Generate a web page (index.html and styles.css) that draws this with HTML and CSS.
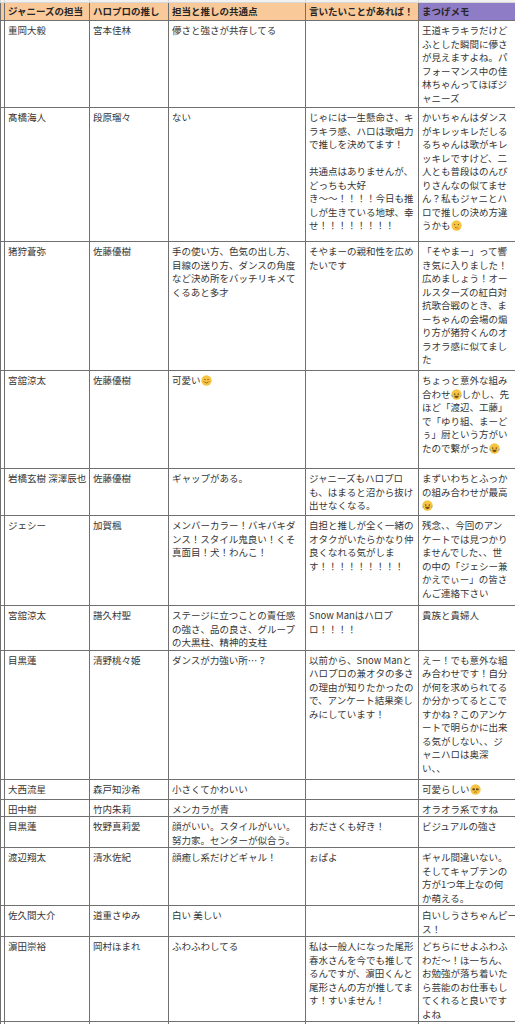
FILE: index.html
```html
<!DOCTYPE html>
<html lang="ja">
<head>
<meta charset="utf-8">
<title>ジャニハロ アンケート</title>
<link rel="stylesheet" href="styles.css">
</head>
<body>
<svg width="0" height="0" class="defs">
  <defs>
    <symbol id="e-smile" viewBox="0 0 12 12">
      <circle cx="6" cy="6" r="5.6" fill="#f5c542"/>
      <path d="M3.4 5.2 q0.9-1 1.8 0 M6.8 5.2 q0.9-1 1.8 0" stroke="#7a4a12" stroke-width="0.8" fill="none"/>
      <ellipse cx="3" cy="7.2" rx="1.1" ry="0.7" fill="#f08a6a"/>
      <ellipse cx="9" cy="7.2" rx="1.1" ry="0.7" fill="#f08a6a"/>
      <path d="M4 7.8 q2 1.8 4 0" stroke="#7a4a12" stroke-width="0.8" fill="none"/>
    </symbol>
    <symbol id="e-laugh" viewBox="0 0 12 12">
      <circle cx="6" cy="6" r="5.6" fill="#f5c542"/>
      <path d="M3.2 4.8 l1.6 0.8 l-1.6 0.8 M8.8 4.8 l-1.6 0.8 l1.6 0.8" stroke="#7a4a12" stroke-width="0.8" fill="none"/>
      <path d="M3.4 7.4 h5.2 q-0.6 2.6 -2.6 2.6 q-2 0 -2.6 -2.6z" fill="#7a4a12"/>
      <path d="M1.2 6.4 q-0.6 1.4 0.4 2" stroke="#5aa8e6" stroke-width="1" fill="none"/>
      <path d="M10.8 6.4 q0.6 1.4 -0.4 2" stroke="#5aa8e6" stroke-width="1" fill="none"/>
    </symbol>
    <symbol id="e-hush" viewBox="0 0 12 12">
      <circle cx="6" cy="6" r="5.6" fill="#f5c542"/>
      <circle cx="4" cy="5" r="0.7" fill="#7a4a12"/>
      <circle cx="8" cy="5" r="0.7" fill="#7a4a12"/>
      <path d="M4.4 8 q1.6 0.8 3.2 0" stroke="#7a4a12" stroke-width="0.8" fill="none"/>
      <ellipse cx="7.6" cy="9.4" rx="2" ry="1.4" fill="#f0b030"/>
    </symbol>
    <symbol id="e-plead" viewBox="0 0 12 12">
      <circle cx="6" cy="6" r="5.6" fill="#f5c542"/>
      <circle cx="4" cy="5.6" r="1.3" fill="#5a3510"/>
      <circle cx="8" cy="5.6" r="1.3" fill="#5a3510"/>
      <circle cx="4.3" cy="5.2" r="0.45" fill="#fff"/>
      <circle cx="8.3" cy="5.2" r="0.45" fill="#fff"/>
      <path d="M4.6 9 q1.4 -0.9 2.8 0" stroke="#7a4a12" stroke-width="0.8" fill="none"/>
    </symbol>
  </defs>
</svg>
<table class="sheet">
  <colgroup>
    <col class="c0"><col class="c1"><col class="c2"><col class="c3"><col class="c4"><col class="c5">
  </colgroup>
  <thead>
    <tr class="strip"><td></td><td></td><td></td><td></td><td></td><td></td></tr>
    <tr class="head">
      <th class="orange"></th>
      <th class="orange">ジャニーズの担当</th>
      <th class="orange">ハロプロの推し</th>
      <th class="orange">担当と推しの共通点</th>
      <th class="orange">言いたいことがあれば！</th>
      <th class="purple">まつげメモ</th>
    </tr>
  </thead>
  <tbody>
    <tr class="r1"><td></td><td>重岡大毅</td><td>宮本佳林</td><td>儚さと強さが共存してる</td><td></td><td>王道キラキラだけど<br>ふとした瞬間に儚さ<br>が見えますよね。パ<br>フォーマンス中の佳<br>林ちゃんってほぼジ<br>ャニーズ</td></tr>
    <tr class="r2"><td></td><td>髙橋海人</td><td>段原瑠々</td><td>ない</td><td>じゃには一生懸命さ、キ<br>ラキラ感、ハロは歌唱力<br>で推しを決めてます！<br><br>共通点はありませんが、<br>どっちも大好<br>き〜〜！！！！今日も推<br>しが生きている地球、幸<br>せ！！！！！！！！</td><td>かいちゃんはダンス<br>がキレッキレだしる<br>るちゃんは歌がキレ<br>ッキレですけど、二<br>人とも普段はのんび<br>りさんなの似てませ<br>ん？私もジャニとハ<br>ロで推しの決め方違<br>うかも<svg class="emo"><use href="#e-hush"/></svg></td></tr>
    <tr class="r3"><td></td><td>猪狩蒼弥</td><td>佐藤優樹</td><td>手の使い方、色気の出し方、<br>目線の送り方、ダンスの角度<br>など決め所をバッチリキメて<br>くるあと多才</td><td>そやまーの親和性を広め<br>たいです</td><td>「そやまー」って響<br>き気に入りました！<br>広めましょう！オー<br>ルスターズの紅白対<br>抗歌合戦のとき、ま<br>ーちゃんの会場の煽<br>り方が猪狩くんのオ<br>ラオラ感に似てまし<br>た</td></tr>
    <tr class="r4"><td></td><td>宮舘涼太</td><td>佐藤優樹</td><td>可愛い<svg class="emo"><use href="#e-smile"/></svg></td><td></td><td class="emo-lines">ちょっと意外な組み<br>合わせ<svg class="emo"><use href="#e-laugh"/></svg>しかし、先<br>ほど「渡辺、工藤」<br>で「ゆり組、まーど<br>ぅ」厨という方がい<br>たので繋がった<svg class="emo"><use href="#e-laugh"/></svg></td></tr>
    <tr class="r5"><td></td><td>岩橋玄樹 深澤辰也</td><td>佐藤優樹</td><td>ギャップがある。</td><td>ジャニーズもハロプロ<br>も、はまると沼から抜け<br>出せなくなる。</td><td>まずいわちとふっか<br>の組み合わせが最高<br><svg class="emo"><use href="#e-laugh"/></svg></td></tr>
    <tr class="r6"><td></td><td>ジェシー</td><td>加賀楓</td><td>メンバーカラー！バキバキダ<br>ンス！スタイル鬼良い！くそ<br>真面目！犬！わんこ！</td><td>自担と推しが全く一緒の<br>オタクがいたらかなり仲<br>良くなれる気がしま<br>す！！！！！！！！！</td><td>残念、、今回のアン<br>ケートでは見つかり<br>ませんでした、、世<br>の中の「ジェシー兼<br>かえでぃー」の皆さ<br>んご連絡下さい</td></tr>
    <tr class="r7"><td></td><td>宮舘涼太</td><td>譜久村聖</td><td>ステージに立つことの責任感<br>の強さ、品の良さ、グループ<br>の大黒柱、精神的支柱</td><td>Snow Manはハロプ<br>ロ！！！！</td><td>貴族と貴婦人</td></tr>
    <tr class="r8"><td></td><td>目黒蓮</td><td>清野桃々姫</td><td>ダンスが力強い所…？</td><td>以前から、Snow Manと<br>ハロプロの兼オタの多さ<br>の理由が知りたかったの<br>で、アンケート結果楽し<br>みにしています！</td><td>えー！でも意外な組<br>み合わせです！自分<br>が何を求められてる<br>か分かってるとこで<br>すかね？このアンケ<br>ートで明らかに出来<br>る気がしない、、ジ<br>ャニハロは奥深<br>い、、</td></tr>
    <tr class="r9"><td></td><td>大西流星</td><td>森戸知沙希</td><td>小さくてかわいい</td><td></td><td>可愛らしい<svg class="emo"><use href="#e-plead"/></svg></td></tr>
    <tr class="r10"><td></td><td>田中樹</td><td>竹内朱莉</td><td>メンカラが青</td><td></td><td>オラオラ系ですね</td></tr>
    <tr class="r11"><td></td><td>目黒蓮</td><td>牧野真莉愛</td><td>顔がいい。スタイルがいい。<br>努力家。センターが似合う。</td><td>おださくも好き！</td><td>ビジュアルの強さ</td></tr>
    <tr class="r12"><td></td><td>渡辺翔太</td><td>清水佐紀</td><td>顔癒し系だけどギャル！</td><td>ぉぱよ</td><td>ギャル間違いない。<br>そしてキャプテンの<br>方が1つ年上なの何<br>か萌える。</td></tr>
    <tr class="r13"><td></td><td>佐久間大介</td><td>道重さゆみ</td><td>白い 美しい</td><td></td><td>白いしうさちゃんピー<br>ス！</td></tr>
    <tr class="r14"><td></td><td>濵田崇裕</td><td>岡村ほまれ</td><td>ふわふわしてる</td><td>私は一般人になった尾形<br>春水さんを今でも推して<br>るんですが、濵田くんと<br>尾形さんの方が推してま<br>す！すいません！</td><td>どちらにせよふわふ<br>わだ〜！ほ一ちん、<br>お勉強が落ち着いた<br>ら芸能のお仕事もし<br>てくれると良いです<br>よね</td></tr>
    <tr class="r15"><td></td><td></td><td></td><td></td><td></td><td></td></tr>
  </tbody>
</table>
</body>
</html>
```

FILE: styles.css
```css
html, body {
  margin: 0;
  padding: 0;
  background: #ffffff;
  overflow: hidden;
}

body {
  width: 515px;
  height: 1024px;
  font-family: "Noto Sans CJK JP", "Noto Sans", sans-serif;
  font-size: 9.5px;
  color: #363636;
}

.defs {
  position: absolute;
  width: 0;
  height: 0;
}

.sheet {
  border-collapse: collapse;
  table-layout: fixed;
  width: 518px;
}

.c0 { width: 4px; }
.c1 { width: 85px; }
.c2 { width: 79px; }
.c3 { width: 137px; }
.c4 { width: 113px; }
.c5 { width: 100px; }

.sheet td,
.sheet th {
  border: 1px solid #707070;
  padding: 3px 3px 0 3px;
  vertical-align: top;
  text-align: left;
  line-height: 13.5px;
  white-space: nowrap;
  overflow: hidden;
}

.sheet td:first-child,
.sheet th:first-child {
  padding: 0;
}

.strip td {
  height: 2px;
  padding: 0;
  background: #f1f1f1;
  border-top: none;
  border-color: #d8d8d8;
}

.head th {
  height: 17px;
  padding: 0 3px;
  vertical-align: middle;
  font-weight: 700;
  color: #262626;
  line-height: 17px;
}

.orange { background: #f9c99a; }
.purple { background: #8f7cc6; }

.emo {
  width: 11px;
  height: 11px;
  vertical-align: -2px;
}

.emo-lines { line-height: 15.5px; }

.r1 { height: 87px; }
.r2 { height: 134px; }
.r3 { height: 129px; }
.r4 { height: 98px; }
.r5 { height: 47px; }
.r6 { height: 90px; }
.r7 { height: 44px; }
.r8 { height: 129px; }
.r9 { height: 20px; }
.r10 { height: 17px; }
.r11 { height: 29px; }
.r12 { height: 58px; }
.r13 { height: 30px; }
.r14 { height: 84px; }
.r15 { height: 20px; }
```
